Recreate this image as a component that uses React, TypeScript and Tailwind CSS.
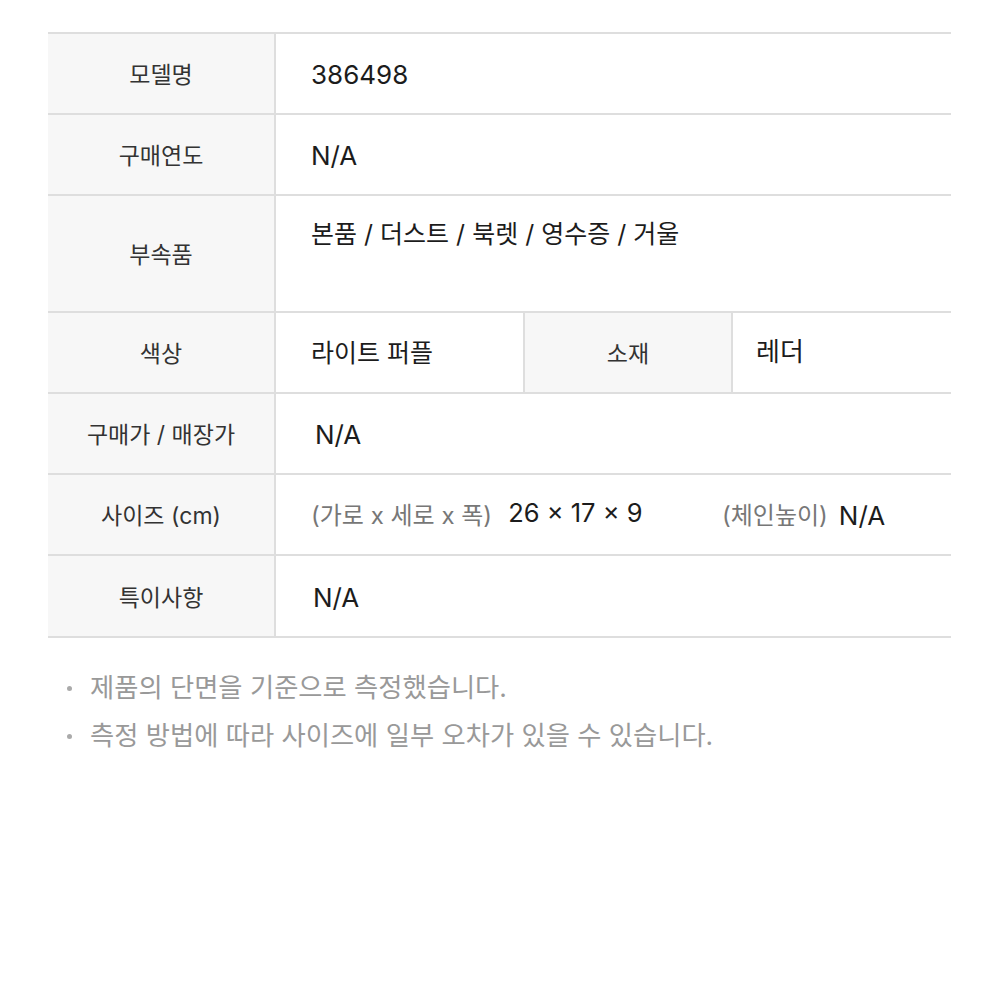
import React from "react";

const font = { fontFamily: '"Inter", "Noto Sans CJK KR", sans-serif' };

function Label({ children, className = "" }: { children: React.ReactNode; className?: string }) {
  return (
    <div
      className={`flex shrink-0 items-center justify-center bg-[#f7f7f7] pt-[4px] text-[23px] text-[#333] ${className}`}
    >
      {children}
    </div>
  );
}

function Row({ label, children, h = "h-[81px]" }: { label: string; children: React.ReactNode; h?: string }) {
  return (
    <div className={`flex border-b-2 border-[#dedede] ${h}`}>
      <Label className="w-[228px] border-r-2 border-[#dedede]">{label}</Label>
      {children}
    </div>
  );
}

export default function App() {
  return (
    <div className="min-h-[1000px] bg-white pt-8" style={font}>
      <div className="ml-[48px] mr-[49px] border-t-2 border-[#dedede]">
        <Row label="모델명">
          <div className="flex flex-1 items-center pl-[35px] pt-[2px] text-[26px] text-[#1c1c1c]">386498</div>
        </Row>
        <Row label="구매연도">
          <div className="flex flex-1 items-center pl-[35px] pt-[2px] text-[26px] text-[#1c1c1c]">N/A</div>
        </Row>
        <Row label="부속품" h="h-[117px]">
          <div className="flex-1 pl-[35px] pt-[20px] text-[25px] text-[#1c1c1c]">
            본품 / 더스트 / 북렛 / 영수증 / 거울
          </div>
        </Row>
        <Row label="색상">
          <div className="flex w-[247px] items-center pl-[35px] pt-[2px] text-[25px] text-[#1c1c1c]">라이트 퍼플</div>
          <Label className="w-[210px] border-x-2 border-[#dedede]">소재</Label>
          <div className="flex flex-1 items-center pb-[2px] pl-[23px] text-[26px] text-[#1c1c1c]">레더</div>
        </Row>
        <Row label="구매가 / 매장가">
          <div className="flex flex-1 items-center pl-[39px] pt-[2px] text-[26px] text-[#1c1c1c]">N/A</div>
        </Row>
        <Row label="사이즈 (cm)">
          <div className="flex flex-1 items-center pl-[35px] pt-[2px]">
            <div className="flex w-[411px] items-center">
              <span className="text-[24px] text-[#777]">(가로 x 세로 x 폭)</span>
              <span className="ml-[16px] pb-[4px] text-[25.5px] text-[#1c1c1c]">26 × 17 × 9</span>
            </div>
            <span className="text-[24px] text-[#777]">(체인높이)</span>
            <span className="ml-[11px] text-[26px] text-[#1c1c1c]">N/A</span>
          </div>
        </Row>
        <Row label="특이사항" h="h-[82px]">
          <div className="flex flex-1 items-center pl-[37px] pt-[2px] text-[26px] text-[#1c1c1c]">N/A</div>
        </Row>
      </div>
      <ul className="mx-[48px] mt-[26px] text-[26.3px] leading-[48px] text-[#999]">
        {["제품의 단면을 기준으로 측정했습니다.", "측정 방법에 따라 사이즈에 일부 오차가 있을 수 있습니다."].map((t) => (
          <li key={t} className="flex items-center">
            <span className="ml-[19px] mr-[18px] h-[5px] w-[5px] rounded-full bg-[#aaa]" />
            {t}
          </li>
        ))}
      </ul>
    </div>
  );
}
